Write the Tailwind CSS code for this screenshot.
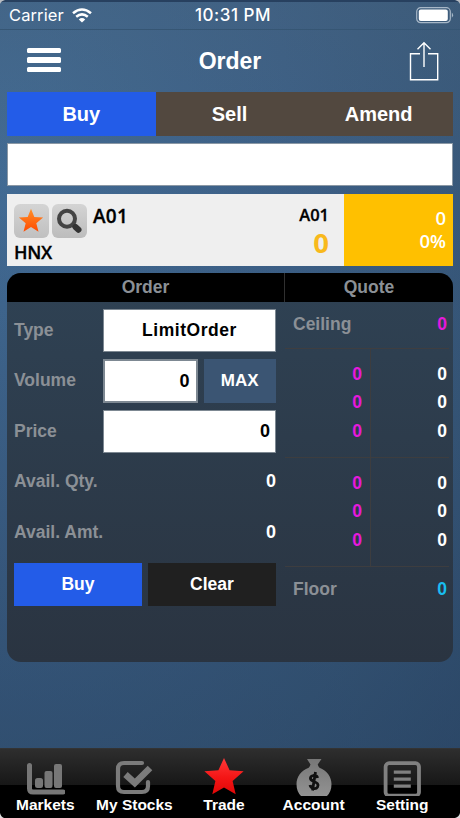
<!DOCTYPE html>
<html lang="en">
<head>
<meta charset="utf-8">
<meta name="viewport" content="width=device-width, initial-scale=1">
<title>Order</title>
<script src="https://cdn.jsdelivr.net/npm/@tailwindcss/browser@4"></script>
</head>
<body class="bg-[#2a4666]">
<div class="relative flex h-[818px] w-[460px] flex-col overflow-hidden bg-[radial-gradient(ellipse_at_0%_20%,#426b94_0%,#3c5f86_45%,#375779_75%,#2c4768_110%)] font-['Liberation_Sans',Arial,sans-serif] font-bold text-white">
  <div class="absolute inset-0 bg-linear-to-b from-[#4a6479]/30 via-transparent via-25% to-[#243e5b]/45"></div>
  <div class="relative flex h-full flex-col">

    <!-- Status bar -->
    <header class="grid h-[30px] shrink-0 grid-cols-3 items-center border-t-2 border-b border-t-[#27405f] border-b-[#365674] pr-1.5 pl-[9px] font-['Inter',sans-serif] font-normal">
      <div class="flex items-center gap-[8px] text-[16.5px] tracking-[0.1px]"><span>Carrier</span>
        <svg class="h-[15px] w-5" viewBox="0 0 20 15" fill="none" stroke="#fff" stroke-width="2.6"><path d="M1 5.2Q10-2.2 19 5.2M4.2 8.7Q10 4.1 15.8 8.7"/><path d="M10 14.6 6.8 11.4Q10 8.8 13.2 11.4Z" fill="#fff" stroke="none"/></svg>
      </div>
      <div class="pl-[3px] text-center text-[17px] font-medium tracking-[0.5px] whitespace-nowrap">10:31 PM</div>
      <svg class="h-[17px] w-[38px] justify-self-end" viewBox="0 0 38 17"><rect x=".7" y=".7" width="33.6" height="15" rx="4" fill="none" stroke="#a7b7c7" stroke-width="1.2"/><rect x="2.8" y="2.5" width="29" height="11.4" rx="2" fill="#fff"/><path d="M35.8 5.6Q38.4 8.2 35.8 10.8Z" fill="#a7b7c7"/></svg>
    </header>

    <!-- Title bar -->
    <nav class="grid h-[62px] shrink-0 grid-cols-3 items-center pr-[21px] pl-[27px]">
      <div class="flex w-[34px] flex-col gap-[4px] pb-[2px]"><i class="h-[5.6px] rounded-[1.5px] bg-white"></i><i class="h-[5.6px] rounded-[1.5px] bg-white"></i><i class="h-[5.6px] rounded-[1.5px] bg-white"></i></div>
      <h1 class="text-center text-[23px]"><span class="relative -left-[3px]">Order</span></h1>
      <svg class="h-10 w-[30px] justify-self-end" viewBox="0 0 30 40" fill="none" stroke="#fff" stroke-width="1.4"><path d="M11 12.7H1.5v26.1h27.2V12.7H19M15 26V1.8M8.5 8.2 15 1.8l6.5 6.4"/></svg>
    </nav>

    <main class="flex flex-1 flex-col px-[7px]">
      <div class="grid h-11 shrink-0 grid-cols-3 text-center text-[20px]/[44px]">
        <div class="bg-[#235ce8]">Buy</div><div class="bg-[#52483f] pr-px">Sell</div><div class="bg-[#52483f]">Amend</div>
      </div>
      <div class="mt-[7px] h-[43px] shrink-0 border-[1.5px] border-[#8b98a5] bg-white"></div>

      <section class="mt-[7.5px] flex h-[72px] shrink-0 bg-[#efefef] font-['Open_Sans','Noto_Sans',sans-serif] text-black">
        <div class="flex flex-1 flex-col pt-[10px] pl-[7px]">
          <div class="flex items-start gap-[3.5px]">
            <div class="flex size-[34.5px] items-center justify-center rounded-md bg-linear-to-b from-[#d4d4d4] to-[#c0c0c0]">
              <svg class="size-[26px]" viewBox="0 0 26 26"><defs><linearGradient id="orange" x2="0" y2="1"><stop stop-color="#ff9029"/><stop offset="1" stop-color="#ff4a00"/></linearGradient></defs><path fill="url(#orange)" d="m13 .7 3.3 8.2 8.8.6-6.8 5.7 2.2 8.6-7.5-4.7-7.5 4.7 2.2-8.6L.9 9.5l8.8-.6Z"/></svg>
            </div>
            <div class="flex size-[34.5px] items-center justify-center rounded-md bg-linear-to-b from-[#d4d4d4] to-[#bcbcbc]">
              <svg class="size-[26px]" viewBox="0 0 26 26" fill="none" stroke="#444"><circle cx="11" cy="10.7" r="8" stroke-width="4"/><path d="m17 17 1.5 1.5" stroke-width="4"/><path d="m19.5 19 3 2.8" stroke="#333" stroke-width="6" stroke-linecap="round"/></svg>
            </div>
            <span class="ml-[3px] text-[19px]/[24px] font-semibold tracking-[0.3px] [-webkit-text-stroke:0.3px]">A01</span>
          </div>
          <span class="mt-[2.5px] text-[18px]/[22px] font-semibold tracking-[-0.3px] [-webkit-text-stroke:0.3px]">HNX</span>
        </div>
        <div class="flex flex-col items-end pt-[10px] pr-[15px]"><span class="text-[16.5px]/[22px] font-semibold [-webkit-text-stroke:0.3px]">A01</span><span class="text-[27.5px]/[34px] font-bold text-[#f8b91c]">0</span></div>
        <div class="flex w-[109px] flex-col bg-[#ffc000] pt-[12px] pr-[7px] text-right text-[18.5px]/[23px] font-semibold text-white"><span>0</span><span>0%</span></div>
      </section>

      <section class="mt-[7px] flex h-[389px] shrink-0 overflow-hidden rounded-[14px] bg-linear-to-b from-[#2f4254] to-[#2a3441] text-[17.5px] text-[#8b9096]">
        <!-- Order form -->
        <div class="flex w-[277px] flex-col">
          <h2 class="h-[29px] shrink-0 bg-black text-center leading-[29px]">Order</h2>
          <div class="grid grid-cols-[89px_1fr] gap-y-[7px] pt-[7px] pr-[8px] pl-[7px] leading-[43.5px]">
            <span>Type</span><div class="h-[43.5px] border-[1.5px] border-[#7d8892] bg-white text-center leading-[41px] text-black"><span class="tracking-[0.55px]">LimitOrder</span></div>
            <span>Volume</span>
            <div class="flex h-[43.5px] gap-1.5"><div class="w-[94.5px] border-2 border-[#7d8892] bg-white pr-1.5 text-right text-[18px] leading-[40px] text-black">0</div><button class="flex-1 bg-[#3b5573] text-[17px] leading-[43px] text-white">MAX</button></div>
            <span>Price</span><div class="h-[43.5px] border-[1.5px] border-[#7d8892] bg-white pr-[5px] text-right text-[18px] leading-[41px] text-black">0</div>
            <span class="whitespace-nowrap">Avail. Qty.</span><span class="text-right text-[18px] text-white">0</span>
            <span class="whitespace-nowrap">Avail. Amt.</span><span class="text-right text-[18px] text-white">0</span>
          </div>
          <div class="mt-[8.5px] mr-[8px] ml-[7px] grid h-[43.5px] grid-cols-2 gap-[6px] text-white"><button class="bg-[#235ce8]">Buy</button><button class="bg-[#202020]">Clear</button></div>
        </div>
        <!-- Quote ladder -->
        <div class="flex flex-1 flex-col">
          <h2 class="h-[29px] shrink-0 border-l border-[#303030] bg-black text-center leading-[29px]">Quote</h2>
          <div class="mr-1 ml-px flex h-[47px] shrink-0 items-center justify-between border-b border-[#3f3e40] pr-[2px] pl-2"><span>Ceiling</span><span class="text-[#e619dc]">0</span></div>
          <div class="mr-1 ml-px grid h-[109px] grid-cols-[86px_1fr] border-b border-[#3d3d3f] text-right leading-[28.8px] text-white">
            <div class="flex flex-col border-r border-[#3d3d3f] pt-[11px] pr-[8px] text-[#e619dc]"><span>0</span><span>0</span><span>0</span></div>
            <div class="flex flex-col pt-[11px] pr-[2px]"><span>0</span><span>0</span><span>0</span></div>
          </div>
          <div class="mr-1 ml-px grid h-[109px] grid-cols-[86px_1fr] border-b border-[#3d3d3f] text-right leading-[28.8px] text-white">
            <div class="flex flex-col border-r border-[#3d3d3f] pt-[11px] pr-[8px] text-[#e619dc]"><span>0</span><span>0</span><span>0</span></div>
            <div class="flex flex-col pt-[11px] pr-[2px]"><span>0</span><span>0</span><span>0</span></div>
          </div>
          <div class="mr-1 ml-px flex h-[46px] items-center justify-between pr-[2px] pl-2"><span>Floor</span><span class="text-[#19bdf0]">0</span></div>
        </div>
      </section>
    </main>

    <!-- Tab bar -->
    <footer class="grid h-[70px] shrink-0 grid-cols-5 border-t border-[#333] bg-[linear-gradient(#2e2e2e,#171717_36px,#000_36px)] pr-[12px] text-center text-[15.5px]/[18px]">
      <a class="flex flex-col items-center pt-[9px] pl-px"><svg class="h-[38px] w-10" viewBox="0 0 40 38" fill="none" stroke="#777" stroke-linecap="round" stroke-linejoin="round"><path d="M4.5 7.5v23q0 3.5 3.5 3.5h30" stroke-width="5"/><g fill="#777" stroke="none"><rect x="10" y="20" width="8" height="10" rx="2.5"/><rect x="19.5" y="13" width="8" height="17" rx="2"/><rect x="29" y="6" width="8" height="24" rx="2"/></g></svg><span>Markets</span></a>
      <a class="flex flex-col items-center pt-[8px]"><svg class="h-[39px] w-10" viewBox="0 0 40 39" fill="none" stroke="#7b7b7b" stroke-linecap="round"><path d="M28 6H10q-6 0-6 6v17q0 6 6 6h18q6 0 6-6V25" stroke-width="4.2"/><path d="m11.5 17.5 9.300 8.500L36 11" stroke-width="6.500" stroke-linecap="butt"/></svg><span class="whitespace-nowrap">My Stocks</span></a>
      <a class="flex flex-col items-center pt-[9px]"><svg class="h-[38px] w-10" viewBox="0 0 40 38"><defs><linearGradient id="red" x2="0" y2="1"><stop stop-color="#ff3939"/><stop offset=".55" stop-color="#f41515"/><stop offset="1" stop-color="#e00707"/></linearGradient></defs><path fill="url(#red)" d="m20 0 5.6 12.2 14 1.1-11 9.6 3.1 13.4L20 29.400 8.300 36.300l3.100-13.400-11-9.600 14-1.100Z"/></svg><span>Trade</span></a>
      <a class="flex flex-col items-center pt-[9px]"><svg class="h-[38px] w-10" viewBox="0 0 40 38"><defs><linearGradient id="grey" x2="0" y2="1"><stop stop-color="#777"/><stop offset="1" stop-color="#929292"/></linearGradient></defs><path fill="url(#grey)" d="M13 1h14.500l-3.800 5.500q.5 2 1.800 3.200C33 12.500 37.500 19 37.500 26q0 7.500-4.500 12H7q-4.500-4.500-4.500-12C2.500 19 7 12.500 14.700 9.700q1.300-1.200 1.800-3.200Z"/><path d="M23.500 20q-.5-3-4-2.500c-4 .8-4 4-.5 5.500 4.500 2 6 3 4.500 6-1.500 2.500-6.500 2-7.500-2M21.500 14 18.500 32.500" fill="none" stroke="#111" stroke-width="2.800"/></svg><span>Account</span></a>
      <a class="flex flex-col items-center pt-[9px] pr-[2px]"><svg class="h-[38px] w-10" viewBox="0 0 40 38" fill="none" stroke="#808080"><rect x="3.600" y="5.200" width="33.400" height="32.500" rx="3.500" stroke-width="3.800"/><path d="M11.800 14.200h17M11.800 21.200h17M11.800 28.200h17" stroke-width="3.200"/></svg><span>Setting</span></a>
    </footer>
  </div>
  <svg class="absolute top-0 left-0 h-1 w-[460px]" viewBox="0 0 460 4"><path fill="#b9bdc3" d="M0 0h5Q1 1 0 4ZM460 0h-5q4 1 5 4Z"/></svg>
  <svg class="absolute bottom-0 left-0 h-[5px] w-[460px]" viewBox="0 0 460 5"><path fill="#ddd" d="M0 0q1 4 4 5H0ZM460 0q-1 4-5 5h5Z"/></svg>
</div>
</body>
</html>
